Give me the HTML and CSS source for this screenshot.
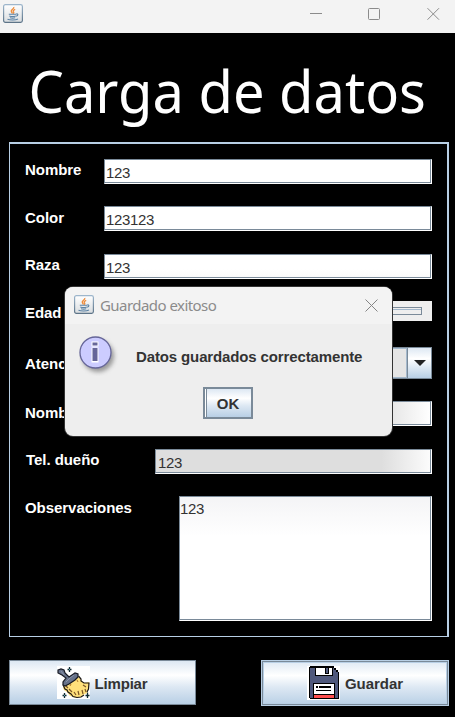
FILE: index.html
```html
<!DOCTYPE html>
<html lang="es">
<head>
<meta charset="utf-8">
<title>Carga de datos</title>
<link rel="stylesheet" href="styles.css">
</head>
<body>
<svg class="defs" width="0" height="0">
  <defs>
    <linearGradient id="tile" x1="0" y1="0" x2="0" y2="1"><stop offset="0" stop-color="#fff"/><stop offset="1" stop-color="#d9dde0"/></linearGradient>
    <linearGradient id="edge" x1="0" y1="0" x2="0" y2="1"><stop offset="0" stop-color="#9db6cc"/><stop offset="1" stop-color="#5d7488"/></linearGradient>
    <symbol id="java" viewBox="0 0 20 19">
      <rect x=".6" y=".6" width="18.8" height="17.8" rx="1.8" fill="url(#tile)" stroke="url(#edge)" stroke-width="1.2"/>
      <path d="M10.8 3c.5 2-3.3 2.700-2.500 4.600.3.700 1 1.200 1.200 1.900M12.200 5.400c-1.800.7-2.500 1.500-1.700 2.500.6.700.2 1.300-.4 1.700" fill="none" stroke="#ee8b3a" stroke-width="1.3"/>
      <path d="M5.800 10.200h7.400M6.300 12c2 .7 4.500.7 6.500 0M7 13.700c1.700.5 3.700.5 5.200 0M13.300 10c2-.5 2.200 1.600-.2 2.300M4.500 15.200c2.500 1 8 1 10.500-.2" fill="none" stroke="#5c83a6" stroke-width="1.1"/>
    </symbol>
  </defs>
</svg>
<div class="window">
  <header class="titlebar">
    <svg class="java" width="20" height="19"><use href="#java"/></svg>
    <svg class="controls" width="130" height="12" viewBox="0 0 130 12" fill="none" stroke="#8b8b8b" stroke-width="1">
      <path d="M0 5.500h12M117.500.2L129 11.700M129 .2l-11.500 11.500"/>
      <rect x="58.500" y=".5" width="11" height="11" rx="1"/>
    </svg>
  </header>
  <h1 class="title"><span>Carga de datos</span></h1>
  <main class="panel">
    <div class="row r1"><label>Nombre</label><div class="field">123</div></div>
    <div class="row r2"><label>Color</label><div class="field">123123</div></div>
    <div class="row r3"><label>Raza</label><div class="field">123</div></div>
    <div class="row r4"><label>Edad</label><div class="slider"><div class="track"></div></div></div>
    <div class="row r5"><label>Atención</label><div class="combo"><div class="value"></div><div class="arrow"><svg width="12" height="6"><path d="M0 0h12L6 6z" fill="#222"/></svg></div></div></div>
    <div class="row r6"><label>Nombre dueño</label><div class="field"></div></div>
    <div class="row r7"><label>Tel. dueño</label><div class="field">123</div></div>
    <div class="row r8"><label>Observaciones</label><div class="field area">123</div></div>
  </main>
  <footer class="actions">
    <div class="button clean">
      <svg width="33" height="33" viewBox="0 0 33 33">
        <path fill="#fff" d="M0 0h33v33H0z"/>
        <path d="M8 19l13-9 3 4 3 3 5-1v5l-2 6-4 2-2 2-6 .5-5-1.500-3-4-3-2-1-2z" fill="#ffe07b"/>
        <path d="M6 18.500l1 2.500 1 2 2 1 1 2 3 2 2 2.500 4 1 4-.5 3-2M21.500 10l2.500 3v2l3 2h5l-.5 6-1.500 3" fill="none" stroke="#1c1714" stroke-width="1.200"/>
        <path d="M9 20l2 2M12 23l3 3M17 26l2 3M21 25l1 4M25 24l1 4M26 19l3 2M28 23l1 3" stroke="#7b5424" stroke-width="1.200"/>
        <path d="M14 18l-1 2M20 14l1 2" stroke="#ab742b"/>
        <path d="M1 4l3-1 3 1 1 3 4 4 3-2 3-2 3 1v3l-3 3-6 4-4 2-2-1v-3l3-4-4-3-4-2z" fill="#67728a" stroke="#161923" stroke-width="1.200"/>
        <path d="M4 5l3 4M9 16l4-4 4-3" fill="none" stroke="#8a94aa"/>
        <path d="M12.500 1v5M10.500 3.500h4M7.500 27v5M5.500 29.500h4M30.500 26.500v5.500M28.500 29.500h4" stroke="#102a32" stroke-width="1.300"/>
        <path d="M12 3h1v1h-1zM7 29h1v1H7z" fill="#66aebb"/>
      </svg>
      <span>Limpiar</span>
    </div>
    <div class="button save">
      <svg width="33" height="34" viewBox="0 0 33 34" shape-rendering="crispEdges">
        <path fill="#fff" d="M0 0h33v34H0z"/>
        <path d="M3 0h24v2h2v2h2v2h1v27H3v-1H2V1h1z" fill="#000"/>
        <path d="M3 2h24v2h2v2h2v26H3z" fill="#50597c"/>
        <path d="M8 1h18v9H8z" fill="#000"/>
        <path d="M9 2h16v7H9z" fill="#fff"/>
        <path d="M18 2h4v6h-4z" fill="#000"/><path d="M19 2h2v5h-2z" fill="#50597c"/>
        <path d="M6 17h22v16H6z" fill="#000"/>
        <path d="M7 18h20v10H7z" fill="#fff"/>
        <path d="M9 20h2v2H9zM12 20h12v2H12zM9 24h15v1H9z" fill="#000"/>
        <path d="M7 29h20v3H7z" fill="#ff5050"/>
      </svg>
      <span>Guardar</span>
    </div>
  </footer>
  <section class="dialog">
    <div class="dialog-bar">
      <svg class="java" width="20" height="19"><use href="#java"/></svg>
      <span>Guardado exitoso</span>
      <svg class="close" width="13" height="13" viewBox="0 0 13 13"><path d="M.5.5l12 12M12.500.5l-12 12" stroke="#858585"/></svg>
    </div>
    <div class="dialog-body">
      <svg class="info" width="40" height="40" viewBox="0 0 40 40">
        <circle class="shade" cx="19" cy="20" r="16"/>
        <circle cx="16.500" cy="16.500" r="15.500" fill="#ccccff" stroke="#666699" stroke-width="1.300"/>
        <path d="M12.500 5.500h7v5h-7zM12.500 11.500h7v15h-7z" fill="#fff"/>
        <path d="M13.500 6.500h5v3h-5zM13.500 12h5v13h-5z" fill="#666699"/>
      </svg>
      <p>Datos guardados correctamente</p>
    </div>
    <div class="ok">OK</div>
  </section>
</div>
</body>
</html>
```

FILE: styles.css
```css
* { box-sizing: border-box; }
body { margin: 0; background: #000; font: bold 15px/18px "Liberation Sans", Arial, sans-serif; letter-spacing: -.05px; }
.defs { position: absolute; }
.window { position: relative; width: 455px; height: 717px; overflow: hidden; background: #000; }
.titlebar { height: 33px; background: #f3f3f3; display: flex; justify-content: space-between; padding: 4px 15px 0 3px; }
.java { display: block; flex: none; }
.controls { margin-top: 4px; }
.title { margin: 0; height: 109px; padding-top: 17px; color: #fff; font: 400 59px/80px "Noto Sans", "Open Sans", sans-serif; letter-spacing: 0; display: flex; justify-content: center; white-space: nowrap; }
.title span { flex: none; transform: scaleX(.95); }

.panel { margin: 0 6px 0 9px; height: 495px; padding: 15px 15px 0; border: solid #b8cfe5; border-width: 2px 2px 1px 1px; color: #fff; }
.row { display: flex; justify-content: space-between; white-space: nowrap; }
.row label { flex: none; width: 79px; padding-top: 2px; }
.r2 { margin-top: 22px; } .r2 label { padding-top: 3px; }
.r3 { margin-top: 23px; }
.r4 { margin-top: 22px; } .r4 label { padding-top: 3px; }
.r5 { margin-top: 25px; } .r5 label { padding-top: 8px; }
.r6 { margin-top: 22px; } .r6 label { width: 130px; padding-top: 3px; }
.r7 { margin-top: 23px; } .r7 label { width: 130px; padding-left: 1px; }
.r8 { margin-top: 22px; } .r8 label { width: 154px; padding-top: 3px; }
.field { flex: 1; height: 25px; padding: 4px 2px 0 1px; background: #fff; color: #333; font-weight: 400; letter-spacing: -.35px; border: 1px solid #7a8a99; border-right-color: #fff; border-bottom-color: #fff; box-shadow: inset -1px -1px #7a8a99; }
.r3 .field { background: linear-gradient(#fff 60%, #fafafa); }
.r6 .field { background: linear-gradient(90deg, #ddd 80%, #fff); }
.r7 .field { padding-left: 2px; background: linear-gradient(90deg, #dedede 82%, #fcfcfc); }
.field.area { height: 125px; padding: 3px 0 0; background: linear-gradient(#f4f4f6, #fff 32%); }
.slider { flex: 1; height: 20px; padding: 6px 10px; background: #eee; }
.track { height: 8px; border: 1px solid #7a8a99; box-shadow: inset 0 1px #eee, inset 0 2px #a3b8cc; }
.combo { flex: 1; height: 32px; display: flex; border: 1px solid #7a8a99; background: #e5e5e5; }
.value { flex: 1; border: 1px solid #a3b8cc; }
.arrow { width: 24px; display: flex; align-items: center; justify-content: center; border-left: 1px solid #7a8a99; background: linear-gradient(#dde8f3, #fff 35%, #b8cfe5); }

.actions { display: flex; justify-content: space-between; padding: 23px 6px 0 9px; }
.button { height: 45px; display: flex; align-items: center; justify-content: center; color: #333; border: 1px solid #7a8a99; background: linear-gradient(#dde8f3, #fff 33%, #dde8f3 60%, #b8cfe5); }
.button span { margin: 2px 0 0 5px; }
.clean { width: 187px; padding-right: 1px; letter-spacing: -.2px; }
.save { width: 188px; height: 46px; border-color: #b8cfe5; box-shadow: inset 0 0 0 1px #7a8a99, inset 0 0 0 2px #b8cfe5; }

.dialog { position: absolute; left: 65px; top: 287px; width: 327px; height: 149px; border-radius: 8px; background: #eee; overflow: hidden; box-shadow: 0 0 0 1px #333; }
.dialog-bar { height: 37px; display: flex; align-items: flex-start; padding: 8px 14px 0 9px; background: #f3f3f3; color: #8b8b8b; font: 15px/20px "Noto Sans", "Open Sans", sans-serif; letter-spacing: -.55px; }
.dialog-bar span { margin-left: 6px; }
.close { margin: 4px 0 0 auto; }
.dialog-body { height: 63px; display: flex; padding: 12px 0 0 14px; color: #333; }
.info { flex: none; }
.shade { fill: #999; filter: blur(2px); }
.dialog-body p { margin: 12px 0 0 17px; white-space: nowrap; letter-spacing: -.13px; }
.ok { width: 50px; height: 32px; margin-left: 138px; display: flex; align-items: center; justify-content: center; padding-top: 2px; color: #333; border: 2px solid #7a8a99; box-shadow: inset 1px 0 #fff, inset 2px 0 #7a8a99; background: linear-gradient(#dde8f3, #fff 33%, #dde8f3 60%, #b8cfe5); }
```
